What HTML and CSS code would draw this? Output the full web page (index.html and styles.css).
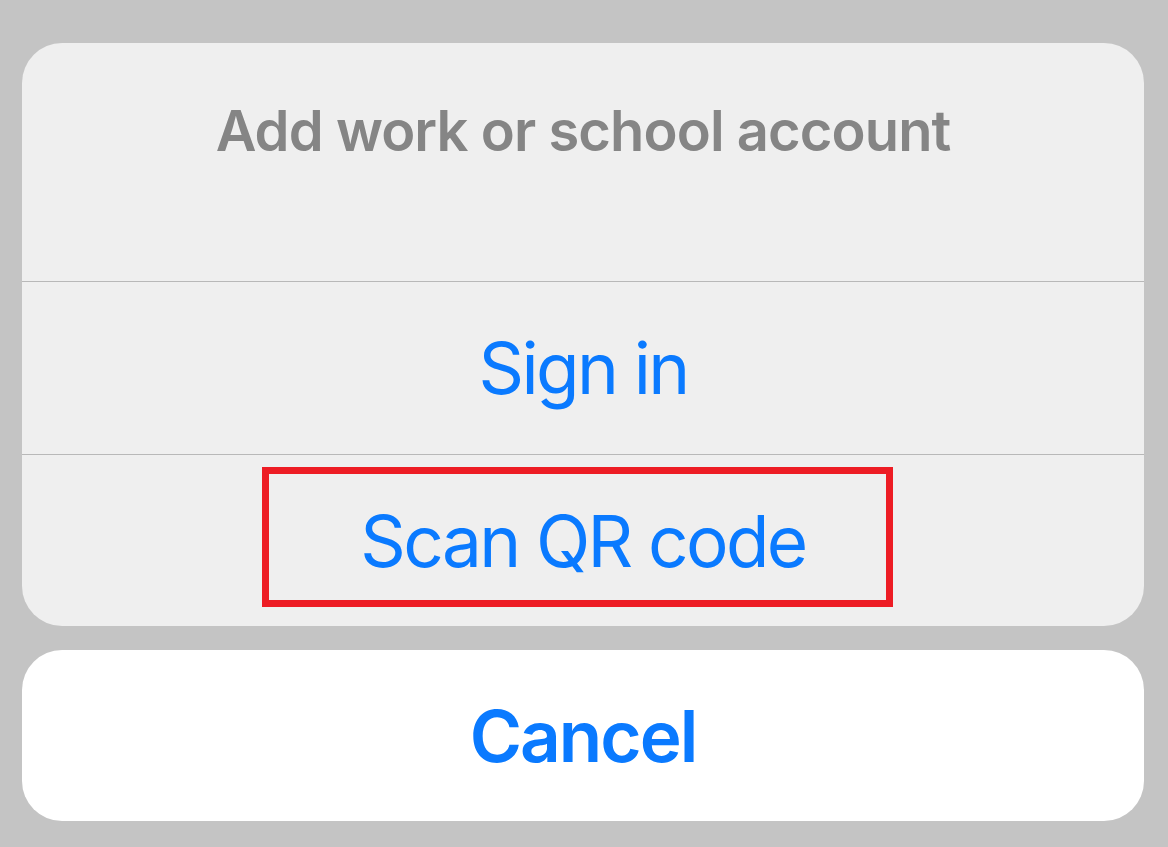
FILE: index.html
```html
<!DOCTYPE html>
<html lang="en">
<head>
  <meta charset="UTF-8" />
  <meta name="viewport" content="width=device-width, initial-scale=1.0"/>
  <title>Add account</title>
  <link rel="stylesheet" href="styles.css">
</head>
<body>

  <div class="sheet">
    <!-- Action group -->
    <div class="sheet-group">
      <div class="sheet-title">Add work or school account</div>
      <div class="sheet-action">Sign in</div>
      <div class="sheet-action sheet-action-marked">
        Scan QR code
        <span class="highlight-box"></span>
      </div>
    </div>

    <!-- Cancel -->
    <div class="sheet-cancel">Cancel</div>
  </div>

</body>
</html>
```

FILE: styles.css
```css
* {
  margin: 0;
  padding: 0;
  box-sizing: border-box;
  font-family: 'Inter', 'Liberation Sans', sans-serif;
}

body {
  background-color: #c4c4c4;
  width: 1168px;
  height: 847px;
  padding: 43px 24px 0 22px;
  overflow: hidden;
}

.sheet {
  display: flex;
  flex-direction: column;
  gap: 24px;
}

.sheet-group {
  background-color: #efefef;
  border-radius: 40px;
  overflow: hidden;
}

.sheet-title {
  height: 239px;
  padding-top: 56px;
  text-align: center;
  font-size: 56px;
  font-weight: 600;
  line-height: 64px;
  letter-spacing: -0.9px;
  color: #858585;
  border-bottom: 1px solid #b8b8b8;
}

.sheet-action {
  position: relative;
  height: 172px;
  display: flex;
  align-items: center;
  justify-content: center;
  font-size: 71px;
  font-weight: 400;
  letter-spacing: -2.6px;
  color: #0a7aff;
}

.sheet-action + .sheet-action {
  border-top: 1px solid #b8b8b8;
}

.highlight-box {
  position: absolute;
  left: 240px;
  top: 12px;
  width: 631px;
  height: 140px;
  border: 7px solid #ed1c24;
}

.sheet-cancel {
  height: 171px;
  background-color: #ffffff;
  border-radius: 40px;
  display: flex;
  align-items: center;
  justify-content: center;
  font-size: 71px;
  font-weight: 600;
  letter-spacing: -2px;
  color: #0a7aff;
}
```
